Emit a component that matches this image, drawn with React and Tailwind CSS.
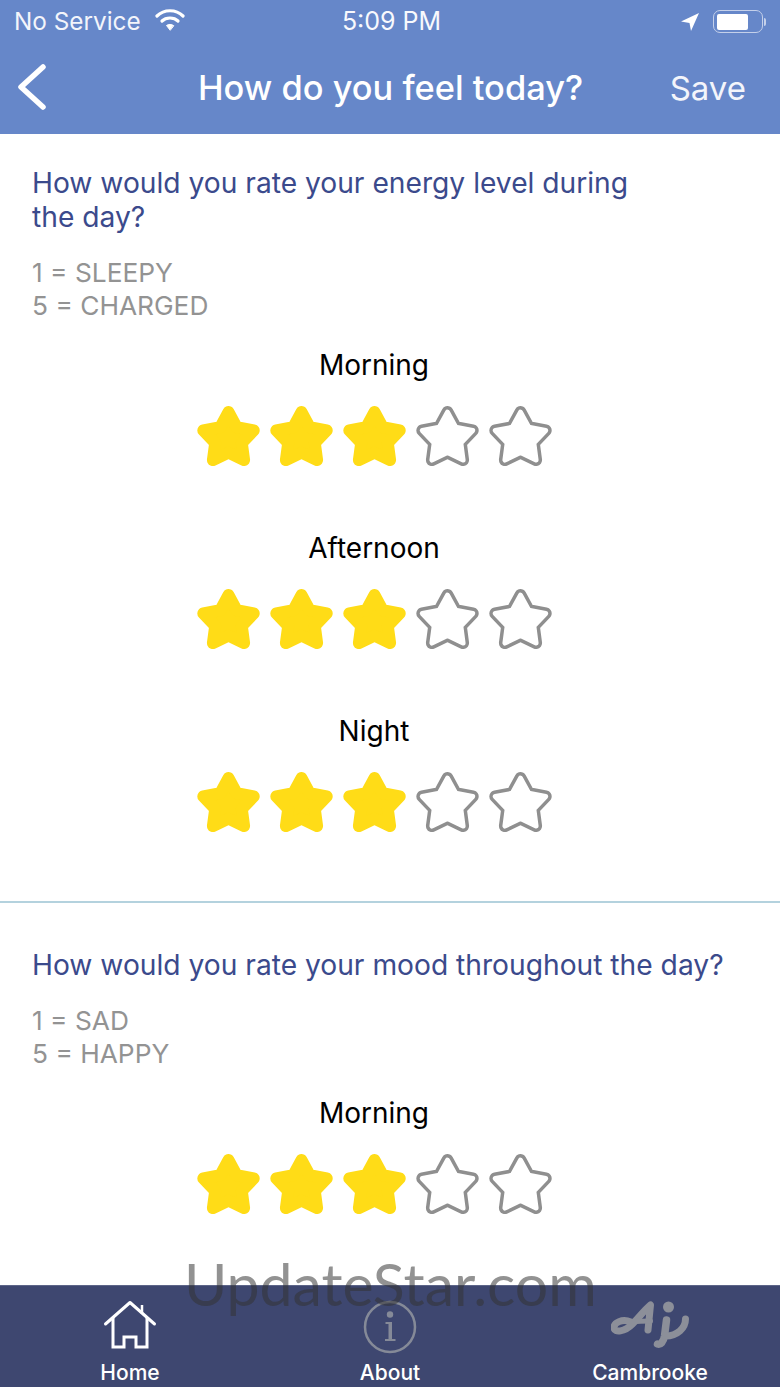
import React from 'react';

const FONT = 'font-["Inter",sans-serif]';

// rounded star, the thick stroke rounds the corners and fattens the arms
const STAR_POINTS = '0,-26.5 8.23,-11.33 25.2,-8.19 13.31,4.33 15.58,21.44 0,14 -15.58,21.44 -13.31,4.33 -25.2,-8.19 -8.23,-11.33';

const Star = ({ filled }) => (
  <svg width="73" height="64" viewBox="-36.5 -34.6 73 64" className="block">
    {filled ? (
      <polygon points={STAR_POINTS} fill="#ffdc17" stroke="#ffdc17" strokeWidth="12" strokeLinejoin="round" />
    ) : (
      <g strokeLinejoin="round">
        <polygon points={STAR_POINTS} fill="#8f8f8f" stroke="#8f8f8f" strokeWidth="12" />
        <polygon points={STAR_POINTS} fill="#fff" stroke="#fff" strokeWidth="5" />
      </g>
    )}
  </svg>
);

const Rating = ({ label, value = 3 }) => (
  <div className="flex flex-col items-center">
    <div className="text-[28px] leading-[34px] text-black">{label}</div>
    <div className="mt-[22px] flex">
      {[1, 2, 3, 4, 5].map((n) => (
        <Star key={n} filled={n <= value} />
      ))}
    </div>
  </div>
);

const Scale = ({ low, high }) => (
  <div className="mt-[22px] text-[26.3px] leading-[33px] text-[#939393]">
    <div>{low}</div>
    <div>{high}</div>
  </div>
);

const TabItem = ({ icon, label }) => (
  <div className="flex flex-1 flex-col items-center">
    <div className="flex h-[58px] items-center justify-center">{icon}</div>
    <div className="mt-[5px] text-[21px] font-medium leading-6 text-white">{label}</div>
  </div>
);

const HomeIcon = () => (
  <svg width="54" height="54" viewBox="0 0 54 54" fill="none" stroke="#fff" strokeWidth="3">
    <path d="M2.5 24 L27 2.5 L51.5 24" strokeLinecap="round" strokeLinejoin="round" />
    <path d="M39 5 V14" strokeWidth="2.5" />
    <path d="M10 17 V47 H21 V37 H33 V47 H44 V17" />
  </svg>
);

const InfoIcon = () => (
  <svg width="54" height="54" viewBox="0 0 54 54" fill="none">
    <circle cx="27" cy="27" r="25" stroke="#858a98" strokeWidth="2.5" />
    <circle cx="27" cy="14.5" r="3.2" fill="#858a98" />
    <path d="M22.5 22 H29 V39 H32.5 V41 H22 V39 H25.5 V24 H22.5 Z" fill="#858a98" />
  </svg>
);

const CambrookeIcon = () => (
  <svg width="78" height="52" viewBox="10.5 6 78 52" fill="none" stroke="#8c8f99" strokeLinecap="round" strokeLinejoin="round">
    <path d="M30 27 C22 23 13 28 13.5 33 C14 38 24 37 32 29 C38 23 44 15 50 10 L47.5 35" strokeWidth="7" />
    <path d="M33 27 C38 26 44 26 50 26" strokeWidth="5" />
    <circle cx="68" cy="12" r="5.5" fill="#8c8f99" stroke="none" />
    <path d="M66 25 L64 41 C63 47 60 50 57 49" strokeWidth="7.5" />
    <path d="M85 24 C85 33 77 41 65 41" strokeWidth="7" />
  </svg>
);

const App = () => (
  <div className={`relative flex h-[1387px] w-[780px] flex-col overflow-hidden bg-white ${FONT}`}>
    {/* status bar + nav */}
    <div className="h-[134px] shrink-0 bg-[#6687c9] text-white">
      <div className="flex h-[42px] items-center px-[14px] pt-px">
        <div className="flex flex-1 items-center">
          <span className="text-[24.3px] leading-none text-[#f3f5fb]">No Service</span>
          <svg width="30" height="24" viewBox="0 0 30 24" fill="none" stroke="#fff" strokeWidth="3.2" strokeLinecap="round" className="ml-[14px] mb-[3px]">
            <path d="M2 8 C9 1 21 1 28 8" />
            <path d="M7 13 C11 9 19 9 23 13" />
            <path d="M15 22 L11.5 17.5 C13.5 16 16.5 16 18.5 17.5 Z" fill="#fff" strokeWidth="1" strokeLinejoin="round" />
          </svg>
        </div>
        <span className="ml-[3px] text-[25px] leading-none text-[#f8f9fd]">5:09 PM</span>
        <div className="flex flex-1 items-center justify-end">
          <svg width="20" height="20" viewBox="0 0 20 20" fill="#fff">
            <path d="M19 1 L1 9.5 L9.5 11 L11 19 Z" strokeLinejoin="round" />
          </svg>
          <div className="ml-[13px] flex h-[23px] w-[50px] items-center rounded-[7px] border-[1.5px] border-[#c4d0ea] p-[2.5px]">
            <div className="h-full w-[31px] rounded-[2px] bg-white" />
          </div>
          <div className="ml-px h-[8px] w-[2px] rounded-r-sm bg-[#c4d0ea]" />
        </div>
      </div>
      <div className="flex h-[92px] items-center pl-[17px] pr-[34px]">
        <div className="flex-1">
          <svg width="30" height="46" viewBox="0 0 30 46" fill="none" stroke="#fff" strokeWidth="5.5" strokeLinecap="round" strokeLinejoin="round" className="mt-[-3px]">
            <path d="M26 3 L4 23 L26 43" />
          </svg>
        </div>
        <span className="ml-[18px] text-[34.4px] font-medium leading-none">How do you feel today?</span>
        <span className="flex-1 text-right text-[33px] leading-none text-[#f3f5fb]">Save</span>
      </div>
    </div>

    {/* questions */}
    <div className="min-h-0 flex-1 overflow-hidden">
      <div className="h-[769px] border-b-2 border-[#b4d2de] pt-[32px]">
        <div className="pl-[32px] pr-[140px]">
          <div className="text-[28.2px] leading-[34px] text-[#3b4a8c]">How would you rate your energy level during the day?</div>
          <Scale low="1 = SLEEPY" high="5 = CHARGED" />
        </div>
        <div className="mt-[26px] flex flex-col gap-[63px] pr-[32px]">
          <Rating label="Morning" />
          <Rating label="Afternoon" />
          <Rating label="Night" />
        </div>
      </div>
      <div className="pt-[45px]">
        <div className="pl-[32px] pr-[20px]">
          <div className="text-[28.2px] leading-[34px] text-[#3b4a8c]">How would you rate your mood throughout the day?</div>
          <Scale low="1 = SAD" high="5 = HAPPY" />
        </div>
        <div className="mt-[26px] pr-[32px]">
          <Rating label="Morning" />
        </div>
      </div>
    </div>

    {/* tab bar */}
    <div className="flex h-[102px] shrink-0 border-t border-[#5d6588] bg-[#3e4770] pt-[12px]">
      <TabItem icon={<HomeIcon />} label="Home" />
      <TabItem icon={<InfoIcon />} label="About" />
      <TabItem icon={<CambrookeIcon />} label="Cambrooke" />
    </div>

    {/* watermark */}
    <div className='absolute left-[184px] top-[1246px] font-["Lato",sans-serif] text-[59px] leading-[76px] text-[#33333388]'>
      UpdateStar.com
    </div>
  </div>
);

export default App;
